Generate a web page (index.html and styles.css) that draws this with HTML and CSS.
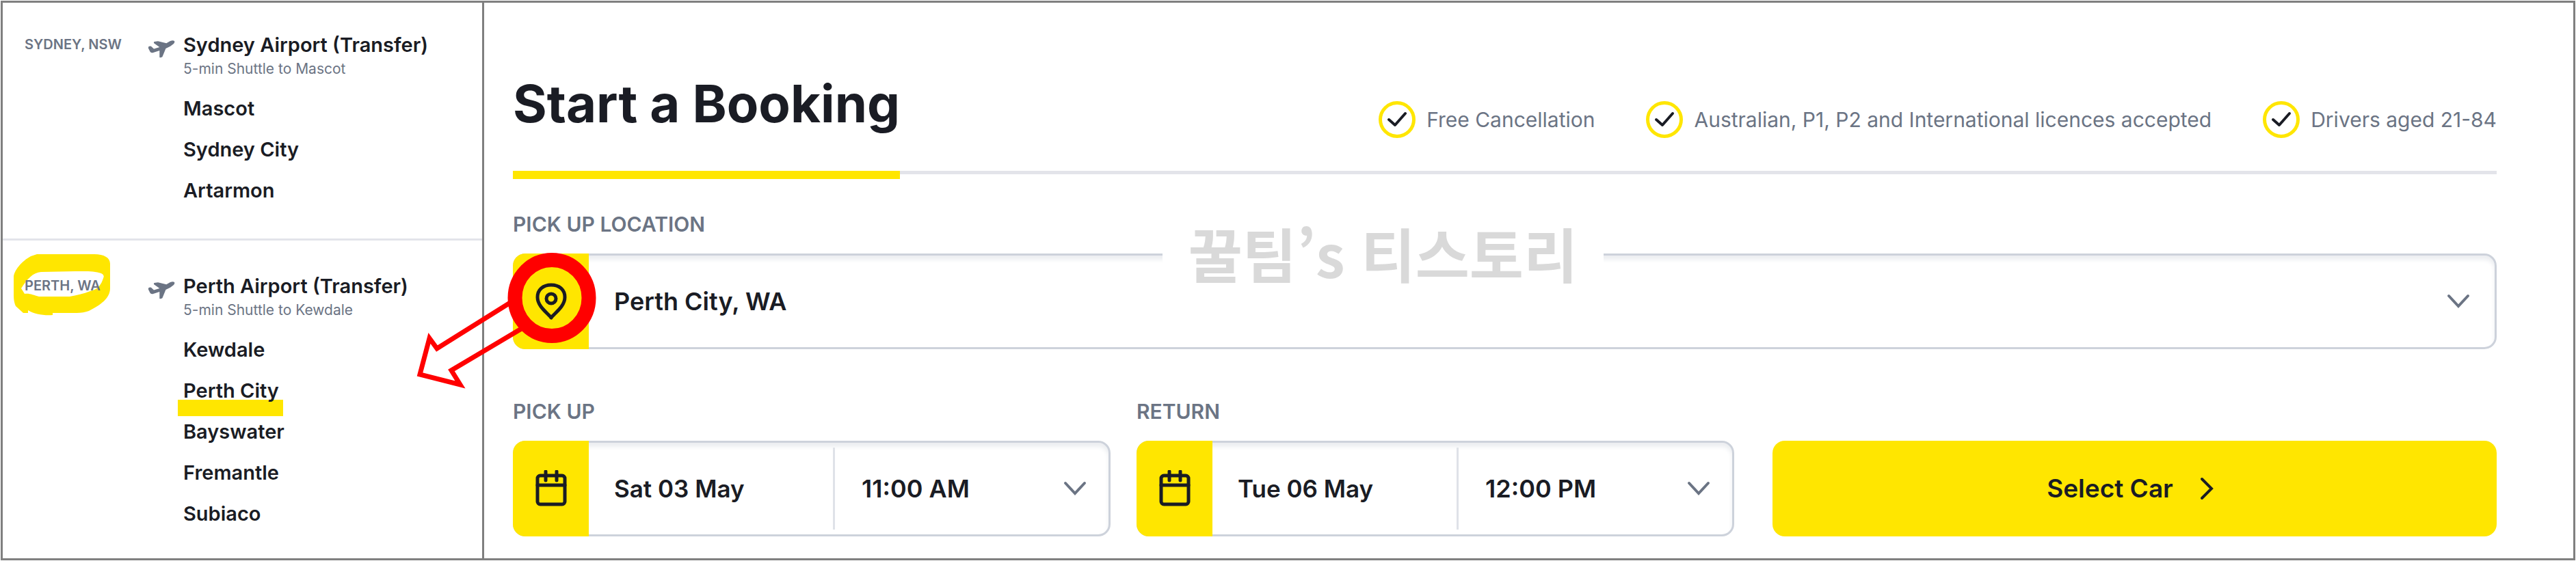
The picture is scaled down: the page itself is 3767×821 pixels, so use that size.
FILE: index.html
```html
<!DOCTYPE html>
<html lang="en">
<head>
<meta charset="utf-8">
<title>Start a Booking</title>
<link rel="stylesheet" href="styles.css">
</head>
<body>
<div class="page">
  <aside class="locations">
    <section class="region">
      <h2 class="region-name"><span class="region-text">SYDNEY, NSW</span></h2>
      <svg class="plane" viewBox="0 0 39 26" aria-hidden="true"><path d="M0 9.500Q2 8 4 8.700L8 12.500 16.300 10 8.200 4.300Q7.500 2.500 8.600 2L14 1.300 26.300 4.300 32 1Q36 -.5 38 1 39 3 37 5L32 8.700 25.400 12 20.400 24.300Q18 25.500 16.300 25L16.300 15 6.300 18.300Q4 18.500 2.700 17L0 11.700Z"/></svg>
      <ul class="places">
        <li class="airport"><a href="#">Sydney Airport (Transfer)</a><p class="note">5-min Shuttle to Mascot</p></li>
        <li><a href="#">Mascot</a></li>
        <li><a href="#">Sydney City</a></li>
        <li><a href="#">Artarmon</a></li>
      </ul>
    </section>
    <section class="region">
      <h2 class="region-name">
        <svg class="scribble" viewBox="0 0 142 90" aria-hidden="true"><path fill-rule="evenodd" d="M34 0H118C132 0 141 5 141 14V50C141 64 128 74 110 83Q102 86 92 86H57V89C45 90 30 88 21 82V86H14L3 76Q0 70 0 60V34C0 24 12 10 25 3ZM40 26C28 27 20 36 11 50L16 58C24 57 28 60 37 62H82C92 60 102 58 112 54 122 52 127 46 130 38Q134 30 128 28C118 24 100 25 90 25Z"/></svg>
        <span class="region-text">PERTH, WA</span>
      </h2>
      <svg class="plane" viewBox="0 0 39 26" aria-hidden="true"><path d="M0 9.500Q2 8 4 8.700L8 12.500 16.300 10 8.200 4.300Q7.500 2.500 8.600 2L14 1.300 26.300 4.300 32 1Q36 -.5 38 1 39 3 37 5L32 8.700 25.400 12 20.400 24.300Q18 25.500 16.300 25L16.300 15 6.300 18.300Q4 18.500 2.700 17L0 11.700Z"/></svg>
      <ul class="places">
        <li class="airport"><a href="#">Perth Airport (Transfer)</a><p class="note">5-min Shuttle to Kewdale</p></li>
        <li><a href="#">Kewdale</a></li>
        <li><a class="underlined" href="#">Perth City</a></li>
        <li><a href="#">Bayswater</a></li>
        <li><a href="#">Fremantle</a></li>
        <li><a href="#">Subiaco</a></li>
      </ul>
    </section>
  </aside>

  <main class="booking">
    <header class="header">
      <h1 class="title">Start a Booking</h1>
      <ul class="features">
        <li><svg class="tick" viewBox="0 0 54 54" aria-hidden="true"><circle cx="27" cy="27" r="24.500"/><path d="M15 27 24 35 39 18"/></svg>Free Cancellation</li>
        <li><svg class="tick" viewBox="0 0 54 54" aria-hidden="true"><circle cx="27" cy="27" r="24.500"/><path d="M15 27 24 35 39 18"/></svg>Australian, P1, P2 and International licences accepted</li>
        <li><svg class="tick" viewBox="0 0 54 54" aria-hidden="true"><circle cx="27" cy="27" r="24.500"/><path d="M15 27 24 35 39 18"/></svg>Drivers aged 21-84</li>
      </ul>
    </header>

    <form class="form">
      <div class="group">
        <label class="label" for="location">PICK UP LOCATION</label>
        <div class="field">
          <span class="tile">
            <svg class="icon" viewBox="0 0 50 54" aria-hidden="true"><path d="M25 51C21 45 5 35 5 21 5 10 13 3 25 3S45 10 45 21C45 35 29 45 25 51Z"/><circle cx="25" cy="23" r="7"/></svg>
            <svg class="pointer" viewBox="0 0 270 206" aria-hidden="true"><path class="arrow" d="M142 79 35 146 24 131 10 184 69 199 56 178 167 112"/><ellipse cx="203" cy="72" rx="54" ry="55.500"/></svg>
          </span>
          <select class="value location" id="location"><option>Perth City, WA</option></select>
          <svg class="chevron" viewBox="0 0 34 22" aria-hidden="true"><path d="M3 3 17 18 31 3"/></svg>
          <span class="watermark" lang="ko">꿀팀’s 티스토리</span>
        </div>
      </div>

      <div class="row">
        <div class="dates">
          <div class="group">
            <label class="label" for="pickup">PICK UP</label>
            <div class="field">
              <span class="tile"><svg class="icon" viewBox="0 0 50 54" aria-hidden="true"><rect x="5" y="8" width="40" height="42" rx="4"/><path d="M5 22H45M17 2V15M33 2V15"/></svg></span>
              <input class="value date" id="pickup" type="text" value="Sat 03 May">
              <select class="value time" aria-label="Pick up time"><option>11:00 AM</option></select>
              <svg class="chevron" viewBox="0 0 34 22" aria-hidden="true"><path d="M3 3 17 18 31 3"/></svg>
            </div>
          </div>
          <div class="group">
            <label class="label" for="return">RETURN</label>
            <div class="field">
              <span class="tile"><svg class="icon" viewBox="0 0 50 54" aria-hidden="true"><rect x="5" y="8" width="40" height="42" rx="4"/><path d="M5 22H45M17 2V15M33 2V15"/></svg></span>
              <input class="value date" id="return" type="text" value="Tue 06 May">
              <select class="value time" aria-label="Return time"><option>12:00 PM</option></select>
              <svg class="chevron" viewBox="0 0 34 22" aria-hidden="true"><path d="M3 3 17 18 31 3"/></svg>
            </div>
          </div>
        </div>
        <button class="submit" type="button">Select Car <svg class="next" viewBox="0 0 22 34" aria-hidden="true"><path d="M4 3 18 17 4 31"/></svg></button>
      </div>
    </form>
  </main>
</div>
</body>
</html>
```
FILE: styles.css
```css
* { box-sizing: border-box; }

body {
  margin: 1px;
  background: #fff;
  color: #1a1c24;
  font-family: Inter, "Noto Sans", sans-serif;
}

h1, h2, p, ul { margin: 0; padding: 0; }
ul { list-style: none; }
a { color: inherit; text-decoration: none; }
svg { display: block; fill: none; }

.page {
  display: flex;
  min-height: calc(100vh - 2px);
  border: 3px solid #7f7f7f;
}

.locations {
  flex: none;
  width: 704px;
  border-right: 3px solid #7f7f7f;
}

.region {
  display: grid;
  grid-template-columns: 169px 39px 1fr;
  column-gap: 12px;
  padding: 42px 0 40px 32px;
}
.region + .region {
  padding-top: 47px;
  padding-bottom: 30px;
  border-top: 3px solid #e3e4ea;
}
.region-name {
  position: relative;
  font-size: 20px;
  font-weight: 600;
  line-height: 38px;
  color: #6b7484;
}
.region-text { position: relative; }
.scribble {
  position: absolute;
  left: -16px;
  top: -27px;
  width: 142px;
  height: 90px;
  fill: #ffe600;
}
.plane {
  width: 39px;
  height: 26px;
  margin-top: 13px;
  fill: #6b7484;
}
.places {
  font-size: 29px;
  font-weight: 600;
  line-height: 60px;
}
.airport { padding-bottom: 13px; line-height: 40px; }
.note {
  font-size: 21px;
  font-weight: 400;
  line-height: 30px;
  color: #6b7484;
}
.underlined { position: relative; }
.underlined::after {
  content: "";
  position: absolute;
  z-index: -1;
  left: -8px;
  right: -6px;
  top: 31px;
  height: 24px;
  background: #ffe600;
}

.booking {
  flex: 1;
  min-width: 0;
  padding: 102px 112px 32px 42px;
}
.header {
  display: flex;
  align-items: flex-end;
  justify-content: space-between;
  border-bottom: 5px solid #e3e4ea;
}
.title {
  margin-bottom: -12px;
  padding-bottom: 54px;
  border-bottom: 12px solid #ffe600;
  font-size: 76px;
  font-weight: 700;
  line-height: 90px;
}
.features {
  display: flex;
  gap: 75px;
  padding-bottom: 48px;
  font-size: 30px;
  line-height: 54px;
  color: #6b7484;
}
.features li { display: flex; gap: 16px; }
.tick { width: 54px; height: 54px; }
.tick circle { stroke: #ffe600; stroke-width: 5; }
.tick path { stroke: #1a1c24; stroke-width: 4; stroke-linecap: round; stroke-linejoin: round; }

.form {
  display: grid;
  gap: 71px;
  padding-top: 53px;
}
.label {
  display: block;
  margin-bottom: 23px;
  font-size: 30px;
  font-weight: 600;
  line-height: 40px;
  color: #6b7484;
}
.field {
  position: relative;
  display: flex;
  align-items: center;
  height: 140px;
  padding-right: 32px;
  border: 3px solid #cdd2db;
  border-radius: 18px;
  box-shadow: inset 0 6px 6px #eceef1;
}
.tile {
  position: relative;
  display: flex;
  flex: none;
  align-items: center;
  justify-content: center;
  width: 111px;
  height: 140px;
  margin-left: -3px;
  border-radius: 18px 0 0 18px;
  background: #ffe600;
}
.icon {
  width: 50px;
  height: 54px;
  stroke: #1a1c24;
  stroke-width: 5;
  stroke-linejoin: round;
  stroke-linecap: round;
}
.pointer {
  position: absolute;
  z-index: 2;
  left: -146px;
  top: -7px;
  width: 270px;
  height: 206px;
  pointer-events: none;
  stroke: #f00;
  stroke-width: 21;
}
.arrow { stroke-width: 7; stroke-miterlimit: 8; }
.value {
  min-width: 0;
  padding: 0;
  border: 0;
  background: transparent;
  appearance: none;
  font: 600 36px/44px Inter, "Noto Sans", sans-serif;
  color: #1a1c24;
}
.location { flex: 1; padding-left: 37px; }
.date {
  flex: 1;
  padding-left: 37px;
  font-size: 35px;
}
.time {
  width: 337px;
  height: 120px;
  padding-left: 39px;
  border-left: 3px solid #dfe2e8;
}
.chevron {
  flex: none;
  width: 34px;
  height: 22px;
  stroke: #6b7484;
  stroke-width: 4;
  stroke-linecap: round;
}
.location + .chevron { margin-right: 4px; }
.watermark {
  position: absolute;
  left: 32.7%;
  top: -70px;
  padding: 0 38px;
  background: #fff;
  font: 700 86px/132px "Noto Sans CJK KR", sans-serif;
  color: #d9d9d9;
}

.row {
  display: grid;
  grid-template-columns: minmax(0, 1786fr) minmax(0, 1059fr);
  gap: 56px;
  align-items: end;
}
.dates {
  display: grid;
  grid-template-columns: repeat(2, minmax(0, 1fr));
  gap: 38px;
}
.submit {
  display: flex;
  align-items: center;
  justify-content: center;
  gap: 38px;
  height: 140px;
  padding: 0 18px 0 6px;
  border: 0;
  border-radius: 18px;
  background: #ffe600;
  font: 600 37px/44px Inter, "Noto Sans", sans-serif;
  color: #1a1c24;
}
.next {
  width: 22px;
  height: 34px;
  stroke: #1a1c24;
  stroke-width: 4;
  stroke-linecap: round;
}
```
